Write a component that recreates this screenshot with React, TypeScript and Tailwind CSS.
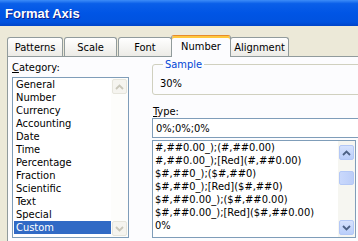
const categories = [
  'General',
  'Number',
  'Currency',
  'Accounting',
  'Date',
  'Time',
  'Percentage',
  'Fraction',
  'Scientific',
  'Text',
  'Special',
  'Custom',
]

const formats = [
  '#,##0.00_);(#,##0.00)',
  '#,##0.00_);[Red](#,##0.00)',
  '$#,##0_);($#,##0)',
  '$#,##0_);[Red]($#,##0)',
  '$#,##0.00_);($#,##0.00)',
  '$#,##0.00_);[Red]($#,##0.00)',
  '0%',
]

const tabs = [
  { label: 'Patterns', cls: 'w-[56px]' },
  { label: 'Scale', cls: 'ml-[1px] w-[53px]' },
  { label: 'Font', cls: 'ml-[1px] w-[54px]' },
  { label: 'Number', cls: 'ml-[-1px] w-[60px]', selected: true },
  { label: 'Alignment', cls: 'ml-[-1px] w-[59px]' },
]

const Chevron = ({ up, color }: { up?: boolean; color: string }) => (
  <svg width="9" height="6" viewBox="0 0 9 6">
    <path
      d={up ? 'M1 5 L4.5 1.5 L8 5' : 'M1 1 L4.5 4.5 L8 1'}
      fill="none"
      stroke={color}
      strokeWidth="1.8"
    />
  </svg>
)

const ScrollButton = ({ up, disabled }: { up?: boolean; disabled?: boolean }) => (
  <div className="h-[17px] p-px">
    <div
      className={`flex h-full items-center justify-center rounded-[2px] border ${
        disabled
          ? 'border-[#E6E5DC] bg-[#F5F4EF]'
          : 'border-[#B4C8F6] bg-[linear-gradient(180deg,#D6E2FD,#BACEFA)]'
      }`}
    >
      <Chevron up={up} color={disabled ? '#C9C7BA' : '#4D6185'} />
    </div>
  </div>
)

export default function App() {
  return (
    <div className="h-[241px] w-[358px] overflow-hidden bg-[#ECE9D8] font-['DejaVu_Sans_Condensed','DejaVu_Sans',sans-serif] text-[11px] leading-[13px] text-black">
      <div className="flex h-[26px] items-center bg-[linear-gradient(180deg,#3D8DF8_0%,#0A5FE9_14%,#0055E5_50%,#0052DF_85%,#0044C8_100%)] pl-[5px] font-['Liberation_Sans',Arial,sans-serif] text-[13px] font-bold text-white [text-shadow:1px_1px_#0B1E8A]">
        Format Axis
      </div>

      <div className="pt-[9px]">
        <div className="flex h-[21px] items-end pl-[7px]">
          {tabs.map((t) =>
            t.selected ? (
              <div
                key={t.label}
                className={`relative z-10 -mb-px flex h-[22px] items-center justify-center rounded-t-[3px] border-x border-t border-[#919B9C] border-t-[#E68B2C] bg-[#FCFCFE] shadow-[inset_0_2px_#FFC73C] ${t.cls}`}
              >
                {t.label}
              </div>
            ) : (
              <div
                key={t.label}
                className={`flex h-[19px] items-center justify-center rounded-t-[3px] border-x border-t border-[#919B9C] bg-[linear-gradient(180deg,#FFFFFF,#ECEBE6)] ${t.cls}`}
              >
                {t.label}
              </div>
            ),
          )}
        </div>

        <div className="ml-[7px] flex h-[185px] w-[400px] border-l border-t border-[#919B9C] bg-[#FCFCFE]">
          <div className="w-[121px] pl-[4px] pt-[4px]">
            <div>
              <span className="underline">C</span>ategory:
            </div>
            <div className="mt-[3px] flex h-[161px] w-[117px] border border-[#7F9DB9] bg-white">
              <div className="flex-1 pl-px">
                {categories.map((c) => (
                  <div
                    key={c}
                    className={`h-[13px] pl-[2px] ${c === 'Custom' ? 'bg-[#316AC5] text-white' : ''}`}
                  >
                    {c}
                  </div>
                ))}
              </div>
              <div className="flex w-[17px] flex-col justify-between bg-[#FDFDFB]">
                <ScrollButton up disabled />
                <ScrollButton disabled />
              </div>
            </div>
          </div>

          <div className="ml-[23px] w-[220px] pt-[1px]">
            <fieldset className="rounded-[3px] border border-[#D0D0BF] pb-[4px] pl-[7px] pt-[6px]">
              <legend className="ml-[3px] px-[2px] text-[#0046D5]">Sample</legend>
              <div>30%</div>
            </fieldset>

            <div className="mt-[10px] pl-px">
              <span className="underline">T</span>ype:
            </div>
            <div className="h-[20px] border border-[#7F9DB9] bg-white pl-[3px] pt-[3px]">0%;0%;0%</div>

            <div className="mt-[2px] flex h-[98px] w-[204px] border border-[#7F9DB9] bg-white">
              <div className="flex-1 pl-[2px]">
                {formats.map((f) => (
                  <div key={f} className="h-[13px] whitespace-nowrap">
                    {f}
                  </div>
                ))}
              </div>
              <div className="flex w-[17px] flex-col bg-[#F6F6F1]">
                <div className="pt-[3px]">
                  <ScrollButton up />
                </div>
                <div className="mt-[10px] h-[14px] px-px">
                  <div className="h-full rounded-[2px] border border-[#B4C8F6] bg-[linear-gradient(90deg,#C9D8FC,#BCCEF8)]" />
                </div>
                <div className="mt-auto pb-[1px]">
                  <ScrollButton />
                </div>
              </div>
            </div>
          </div>
        </div>
      </div>
    </div>
  )
}
